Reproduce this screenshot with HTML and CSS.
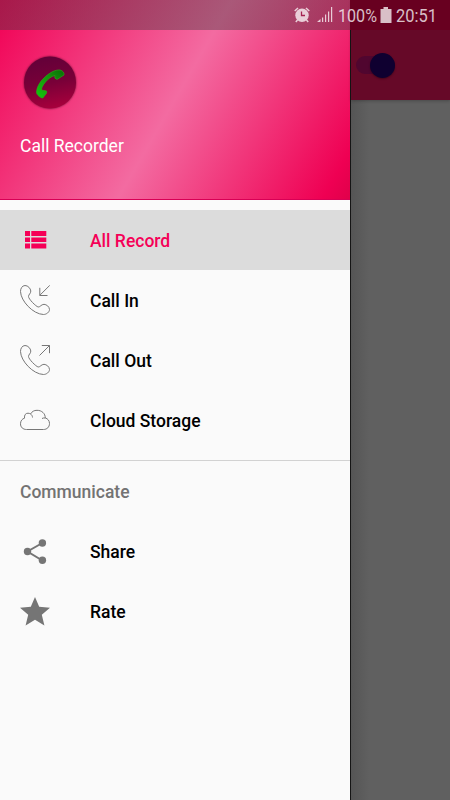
FILE: index.html
```
<!DOCTYPE html>
<html lang="en">
<head>
    <meta charset="UTF-8">
    <meta name="viewport" content="width=device-width, initial-scale=1.0">
    <title>Call Recorder</title>
    <link rel="stylesheet" href="styles.css">
</head>
<body>
    <div class="screen">
        <nav class="drawer">
            <div class="drawer-header">
                <svg class="logo" viewBox="0 0 60 60">
                    <defs>
                        <linearGradient id="disc" x1="0.4" y1="0" x2="0.6" y2="1">
                            <stop offset="0" stop-color="#630039"/>
                            <stop offset="0.5" stop-color="#780038"/>
                            <stop offset="1" stop-color="#a9003c"/>
                        </linearGradient>
                        <linearGradient id="handset" x1="1" y1="0" x2="0" y2="1">
                            <stop offset="0" stop-color="#076f05"/>
                            <stop offset="0.4" stop-color="#16920c"/>
                            <stop offset="1" stop-color="#12c80b"/>
                        </linearGradient>
                    </defs>
                    <circle class="logo-disc" cx="30" cy="30.500" r="26" fill="url(#disc)"/>
                    <path transform="translate(0 .5)" d="M16.500 40C16.500 36 19 30 24 25.500C29 20.500 35 17 40 17.500C43 18 44.500 21 44 22.500L37 27L34.800 25.500L35 23C31 24 28 26.500 25.500 29.500C23 32.500 21.500 35 21.500 37.500L26.500 38.500L26.700 40.500L22.800 45.500C21.500 46 16.500 42.500 16.500 40Z" fill="url(#handset)" stroke="#27b019" stroke-width="0.6"/>
                </svg>
                <div class="app-name">Call Recorder</div>
            </div>
            <ul class="menu">
                <li class="menu-item active">
                    <svg class="icon" viewBox="0 0 30 30" fill="currentColor">
                        <path d="M5 6h5v5H5zM11.300 6h15v5h-15zM5 12.500h5v4.500H5zM11.300 12.500h15v4.500h-15zM5 18.500h5v5H5zM11.300 18.500h15v5h-15z"/>
                    </svg>
                    <span>All Record</span>
                </li>
                <li class="menu-item">
                    <svg class="icon outline" viewBox="0 0 30 30">
                        <path d="M5 .5C2 .7.500 3.500.500 6.500C.8 16 13 29.200 23.500 29.500C26.500 29.500 29.500 27 29.500 24.500C29.300 21.500 26.500 19.500 24 19.300C21 19.500 20.500 22 18.200 22C16 21.500 8.500 14 8.500 11.500C8.500 9.300 10.800 8.800 10.800 6C10.600 3.500 8 .5 5 .5Z"/>
                        <path d="M29.800.3L19.800 10.300M19.800 2.800V10.500H27.500"/>
                    </svg>
                    <span>Call In</span>
                </li>
                <li class="menu-item">
                    <svg class="icon outline" viewBox="0 0 30 30">
                        <path d="M5 .5C2 .7.500 3.500.500 6.500C.8 16 13 29.200 23.500 29.500C26.500 29.500 29.500 27 29.500 24.500C29.300 21.500 26.500 19.500 24 19.300C21 19.500 20.500 22 18.200 22C16 21.500 8.500 14 8.500 11.500C8.500 9.300 10.800 8.800 10.800 6C10.600 3.500 8 .5 5 .5Z"/>
                        <path d="M19.500 10.500L29.500.5M21.800.5H29.500V8.200"/>
                    </svg>
                    <span>Call Out</span>
                </li>
                <li class="menu-item">
                    <svg class="icon outline" viewBox="0 0 30 30">
                        <path d="M6.500 24.500C3 24.500.500 22.200.500 18.800C.500 15.800 2.300 13.700 4.500 13.200C4.200 10 5.500 8.200 8 8.200C9 8.200 9.800 8.500 10.500 9C12 6.500 14 5.300 17 5.300C21.800 5.300 25.300 8.500 25.300 13C27.800 13.500 29.500 15.800 29.500 18.500C29.500 22 27 24.500 23.500 24.500Z"/>
                        <path d="M10.500 9C11.700 9.700 12.500 11 12.500 12.500M25.300 13C24 12.800 23 13 22 13.500"/>
                    </svg>
                    <span>Cloud Storage</span>
                </li>
            </ul>
            <div class="subheader">Communicate</div>
            <ul class="menu">
                <li class="menu-item">
                    <svg class="icon gray" viewBox="0 0 30 30">
                        <path d="M22.300 6L7.500 14.500L22.300 23.500" fill="none" stroke="#757575" stroke-width="2"/>
                        <circle cx="22.400" cy="6" r="3.700"/>
                        <circle cx="7.500" cy="14.500" r="3.700"/>
                        <circle cx="22.400" cy="23.300" r="3.700"/>
                    </svg>
                    <span>Share</span>
                </li>
                <li class="menu-item">
                    <svg class="icon gray" viewBox="0 0 30 30">
                        <path d="M15 0L19.200 9.800L30 10.800L21.800 17.800L24.400 28.500L15 22.800L5.600 28.500L8.200 17.800L0 10.800L10.800 9.800Z"/>
                    </svg>
                    <span>Rate</span>
                </li>
            </ul>
        </nav>
        <main class="page">
            <div class="toolbar">
                <div class="switch"><div class="thumb"></div></div>
            </div>
        </main>
        <div class="status-bar">
            <svg class="alarm" viewBox="0 0 16 16">
                <circle cx="8" cy="8.300" r="6.700" fill="currentColor"/>
                <path d="M.7 4L4 1M15.300 4L12 1M3.500 13L1.800 15M12.500 13L14.200 15" stroke="currentColor" stroke-width="1.500"/>
                <path d="M7.500 4.500V8.500H11" fill="none" stroke="#a52352" stroke-width="1.300"/>
            </svg>
            <svg class="signal" viewBox="0 0 16 16" fill="currentColor">
                <path d="M0 15L3.500 12V15ZM5 10.500h1.200V15H5zM8 7.500h1.200V15H8zM11 4.500h1.200V15H11zM14 0h1.200V15H14z"/>
            </svg>
            <svg class="percent" viewBox="0 0 40 24"><text x="0" y="19.300" textLength="39" lengthAdjust="spacingAndGlyphs">100%</text></svg>
            <svg class="battery" viewBox="0 0 12 16" fill="currentColor">
                <path d="M3.500 0h4.500v2H11.500V16H.500V2H3.500Z"/>
            </svg>
            <svg class="clock" viewBox="0 0 42 24"><text x="0" y="19.300" textLength="41" lengthAdjust="spacingAndGlyphs">20:51</text></svg>
        </div>
    </div>
</body>
</html>
```
FILE: styles.css
```
* {
    box-sizing: border-box;
}
body {
    margin: 0;
    font-family: Roboto, sans-serif;
    color: #000;
}
.screen {
    position: relative;
    display: flex;
    width: 450px;
    height: 800px;
    overflow: hidden;
    background: #606060;
}
.drawer {
    width: 350px;
    background: #fafafa;
    flex-shrink: 0;
}
.drawer-header {
    height: 200px;
    padding: 52px 20px 0;
    background: linear-gradient(120deg, #f10054 0%, #f36ba1 50%, #ef0053 94%, #e0004a 100%);
    border-bottom: 1px solid #d80055;
}
.logo {
    display: block;
    width: 60px;
    height: 60px;
}
.logo-disc {
    filter: drop-shadow(0 0 1px rgba(70, 0, 30, 0.8));
}
.app-name {
    margin-top: 24px;
    font-size: 17.5px;
    line-height: 20px;
    color: #fff;
}
.menu {
    list-style: none;
    margin: 0;
    padding: 0;
}
.drawer-header + .menu {
    margin-top: 10px;
    padding-bottom: 10px;
}
.drawer-header + .menu span {
    padding-top: 2px;
}
.menu-item {
    display: flex;
    align-items: center;
    gap: 40px;
    height: 60px;
    padding: 0 20px;
    font-size: 17.5px;
    font-weight: 500;
}
.menu-item.active {
    background: #dcdcdc;
    color: #f50057;
}
.icon {
    width: 30px;
    height: 30px;
}
.outline {
    fill: none;
    stroke: #777;
    stroke-width: 1;
}
.gray {
    fill: #757575;
}
.subheader {
    height: 62px;
    padding-left: 20px;
    border-top: 1px solid #d2d2d2;
    font-size: 17.5px;
    font-weight: 500;
    line-height: 62px;
    color: #737373;
}
.page {
    flex: 1;
    border-left: 1px solid #151515;
    background: linear-gradient(90deg, #555, #606060 18px);
}
.toolbar {
    height: 100px;
    padding: 56px 0 0 5px;
    background: #660928;
    box-shadow: 0 1px 3px rgba(0, 0, 0, 0.25);
}
.switch {
    display: flex;
    align-items: center;
    justify-content: flex-end;
    width: 39px;
    height: 18px;
    border-radius: 9px;
    background: #50062f;
}
.thumb {
    width: 25px;
    height: 25px;
    flex-shrink: 0;
    border-radius: 50%;
    background: #0f0030;
    box-shadow: 0 1px 2px rgba(0, 0, 0, 0.35);
}
.status-bar {
    position: absolute;
    top: 0;
    left: 0;
    display: flex;
    align-items: center;
    justify-content: flex-end;
    width: 100%;
    height: 30px;
    padding-right: 12px;
    color: rgba(255, 255, 255, 0.75);
    background: linear-gradient(90deg, rgba(60, 60, 60, 0.4) 350px, #680020 350px);
}
.status-bar text {
    font-size: 18.5px;
    fill: currentColor;
}
.alarm {
    width: 16px;
    height: 16px;
    margin-right: 7px;
}
.signal {
    width: 16px;
    height: 16px;
    margin-right: 5px;
}
.percent {
    width: 40px;
    height: 24px;
    margin-right: 2px;
    overflow: visible;
}
.battery {
    width: 12px;
    height: 16px;
    margin-right: 4px;
}
.clock {
    width: 42px;
    height: 24px;
    overflow: visible;
}
```
